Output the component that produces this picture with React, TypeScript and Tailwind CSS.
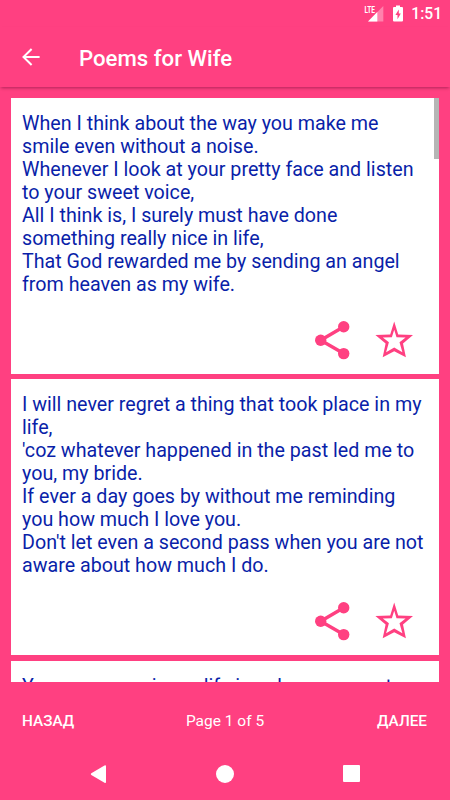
import React from 'react';

const poems = [
  {
    id: 1,
    lines: [
      "When I think about the way you make me",
      "smile even without a noise.",
      "Whenever I look at your pretty face and listen",
      "to your sweet voice,",
      "All I think is, I surely must have done",
      "something really nice in life,",
      "That God rewarded me by sending an angel",
      "from heaven as my wife.",
    ],
  },
  {
    id: 2,
    lines: [
      "I will never regret a thing that took place in my",
      "life,",
      "'coz whatever happened in the past led me to",
      "you, my bride.",
      "If ever a day goes by without me reminding",
      "you how much I love you.",
      "Don't let even a second pass when you are not",
      "aware about how much I do.",
    ],
  },
  {
    id: 3,
    lines: ["Your presence in my life is a dream come true,"],
  },
];

const StatusBar = () => (
  <div className="flex h-[27px] shrink-0 items-center justify-end pr-2">
    <svg width="20" height="18" viewBox="0 0 20 18" className="mr-[9px]" fill="#fff">
      <path d="M19.3 1v15.5H4z" opacity="0.35" />
      <path d="M13.3 7v9.5H4z" />
      <text x="0.4" y="8" fontSize="9.5" fontWeight="700" textLength="10.5" lengthAdjust="spacingAndGlyphs">LTE</text>
    </svg>
    <svg width="10" height="18" viewBox="0 0 10 18" className="mr-[8px]">
      <path d="M3 .5h4v1.5h2q1 0 1 1v12.5q0 1-1 1H1q-1 0-1-1V3q0-1 1-1h2z" fill="#fff" />
      <path d="M5.8 4.5 2.4 10h2.1v4.2L7.8 8.5H5.8z" fill="#ff4081" />
    </svg>
    <span className="pt-[2px] text-[15.6px] font-medium leading-none">1:51</span>
  </div>
);

const ShareIcon = () => (
  <svg width="36" height="40" viewBox="0 0 36 40" fill="#ff4081">
    <path d="M28.7 6.8 5.7 20.3l23 13.3" fill="none" stroke="#ff4081" strokeWidth="3.5" />
    <circle cx="5.7" cy="20.3" r="5.7" />
    <circle cx="28.7" cy="6.8" r="5.7" />
    <circle cx="28.7" cy="33.6" r="5.7" />
  </svg>
);

const StarIcon = () => (
  <svg width="38" height="38" viewBox="0 0 38 38">
    <path
      fill="#ff4081"
      fillRule="evenodd"
      d="M19.2.6 23.2 13.6 38 14 28 22.4 30.9 36.2 19.2 30.3 7.7 36.2 10.6 22.4.4 14 15.2 13.6zM19.2 8.8 16.9 16.2 7.8 16.5 13.9 21.3 11.1 31.2 19.2 26.4 27.4 31.2 24.5 21.3 30.6 16.5 21.5 16.2z"
    />
  </svg>
);

const PoemCard = ({ lines }: { lines: string[] }) => (
  <div className="flex h-[276px] shrink-0 flex-col justify-between bg-white pt-[14px] pl-[11px]">
    <p className="text-[19.68px] leading-[23px] text-[#0a1fa9]">
      {lines.map((line) => (
        <span key={line} className="block whitespace-nowrap">{line}</span>
      ))}
    </p>
    <div className="flex items-center justify-end gap-6 pr-[26px] pb-[14px]">
      <button title="Share"><ShareIcon /></button>
      <button title="Favorite"><StarIcon /></button>
    </div>
  </div>
);

const App = () => {
  return (
    <div className="flex h-[800px] w-[450px] flex-col overflow-hidden bg-[#ff4081] font-['Roboto',sans-serif] text-white">
      <StatusBar />

      {/* Toolbar, the shadow falls only on the list below */}
      <div className="flex h-[60px] shrink-0 items-center pl-[22px] shadow-[0_2px_3px_-1px_rgba(80,0,40,0.45)]">
        <svg width="18" height="18" viewBox="0 0 18 18" fill="none" stroke="#fff" strokeWidth="2">
          <path d="M17.6 9H1.5M9.6 1 1.5 9l8.1 8" />
        </svg>
        <h1 className="ml-[39px] pt-[3px] text-[22.2px] font-medium leading-none">Poems for Wife</h1>
      </div>

      <div className="relative mx-[11px] mt-[11px] flex h-[584px] shrink-0 flex-col gap-[5.4px] overflow-hidden">
        {poems.map((poem) => (
          <PoemCard key={poem.id} lines={poem.lines} />
        ))}
        {/* Scroll thumb */}
        <div className="absolute top-0 right-0 h-[61px] w-[5px] bg-[#b5b5b5]" />
      </div>

      <div className="grid h-[78px] shrink-0 grid-cols-3 items-center pr-[23px] pl-[22px] text-[15.3px]">
        <button className="text-left font-medium">НАЗАД</button>
        <span className="pt-[2px] pl-px text-center text-[15.5px]">Page 1 of 5</span>
        <button className="text-right font-medium">ДАЛЕЕ</button>
      </div>

      <div className="flex flex-1 items-start justify-between px-[90px] pt-[5px]">
        <svg width="17" height="19" viewBox="0 0 17 19" fill="#fff">
          <path d="M14.5.5q1.5-.8 1.5.8v15.6q0 1.6-1.5.8L1.3 9.9q-1-.8 0-1.6z" />
        </svg>
        <div className="h-[18px] w-[18px] rounded-full bg-white" />
        <div className="h-[17px] w-[17px] rounded-[1px] bg-white" />
      </div>
    </div>
  );
};

export default App;
